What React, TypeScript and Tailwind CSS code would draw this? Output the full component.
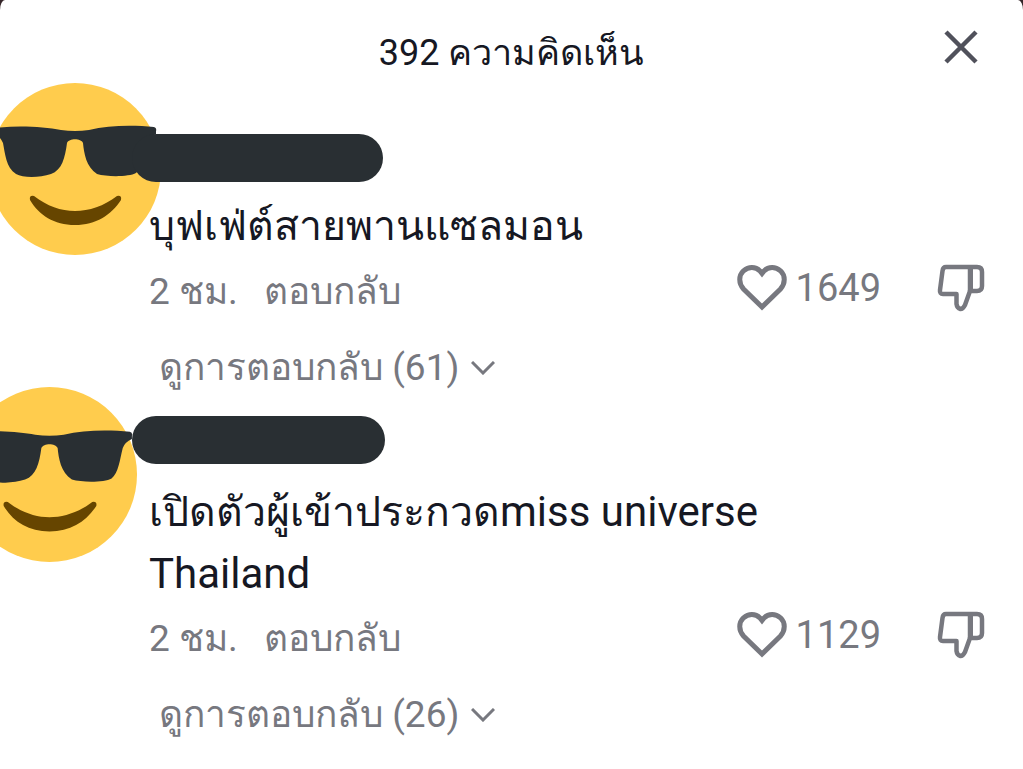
import React from 'react';

interface Comment {
  id: number;
  thai: string;
  latin?: string[];
  time: string;
  likes: number;
  replies: number;
  stickerClass: string;
  pillClass: string;
}

const comments: Comment[] = [
  {
    id: 1,
    thai: 'บุฟเฟ่ต์สายพานแซลมอน',
    time: '2 ชม.',
    likes: 1649,
    replies: 61,
    stickerClass: '-left-[11px] -top-[51px] w-[172px]',
    pillClass: 'left-[132px] top-0 w-[251px]',
  },
  {
    id: 2,
    thai: 'เปิดตัวผู้เข้าประกวด',
    latin: ['miss ', 'universe ', 'Thailand'],
    time: '2 ชม.',
    likes: 1129,
    replies: 26,
    stickerClass: '-left-[38px] -top-[33px] w-[175px]',
    pillClass: 'left-[132px] -top-[4px] w-[253px]',
  },
];

const CoolFace: React.FC<{ className?: string }> = ({ className = '' }) => (
  <svg viewBox="0 0 172 172" className={className} aria-hidden="true">
    <circle cx="86" cy="86" r="86" fill="#ffcc4d" />
    <path
      fill="#292f33"
      d="M5 47Q5 45 8 45C30 42 55 44 72 47Q86 49 100 47C120 42 145 42 165 44Q168 45 167 48V51Q160 54 158 60C155 72 154 84 147 90C140 94 118 94 108 91C97 84 95 70 94 60C92 55 80 55 78 60C76 75 73 87 62 91C50 95 34 95 27 91C17 85 16 70 14 60Q12 55 7 51Q5 50 5 47Z"
    />
    <path
      fill="#664500"
      d="M45 113Q40 112 41 117C50 132 65 142 86 142C107 142 122 132 132 117Q133 112 128 113C115 123 100 128 86 128C72 128 58 123 45 113Z"
    />
  </svg>
);

const HeartIcon: React.FC = () => (
  <svg viewBox="0 0 50 46" className="w-[50px]" fill="none" stroke="currentColor" strokeWidth="5" aria-hidden="true">
    <path d="M25 42L6.500 24C1.500 18.500 1.500 10.500 6.500 5.800C11.500 1.500 18.500 1.500 23 6L25 8.500L27 6C31.500 1.500 38.500 1.500 43.500 5.800C48.500 10.500 48.500 18.500 43.500 24Z" />
  </svg>
);

const DislikeIcon: React.FC = () => (
  <svg
    viewBox="0 0 48 48"
    className="w-[48px]"
    fill="none"
    stroke="currentColor"
    strokeWidth="4.500"
    strokeLinejoin="round"
    aria-hidden="true"
  >
    <path d="M9 3H40Q45 3 45 8V22Q45 27 40 27H33L28 41Q26 45 23.500 45Q20 44 19.500 40V30H6Q2.500 30 3 26L5.500 7Q6 3 9 3Z" />
    <path d="M33 3V27" />
    <path d="M34.500 3V27" strokeWidth="3" />
  </svg>
);

const CommentItem: React.FC<{ comment: Comment }> = ({ comment }) => (
  <article className="relative pt-[61px] pb-[11px] pl-[149px] pr-[38px]">
    <CoolFace className={`absolute ${comment.stickerClass}`} />
    <div className={`absolute h-[48px] rounded-full bg-[#292f33] ${comment.pillClass}`} />

    <p className="relative max-w-[640px] text-[42px] leading-[61px]">
      <span className="text-[41px]">{comment.thai}</span>
      {comment.latin?.map((word) => (
        <span key={word}>{word}</span>
      ))}
    </p>

    <div className="flex items-start justify-between text-[#77787f]">
      <div className="flex gap-[26px] text-[37px] leading-[70px]">
        <span>{comment.time}</span>
        <button type="button">ตอบกลับ</button>
      </div>
      <div className="flex gap-[56px] text-[38px] leading-[62px]">
        <button type="button" className="flex items-center gap-[9px]">
          <HeartIcon />
          {comment.likes}
        </button>
        <button type="button" aria-label="ไม่ชอบ">
          <DislikeIcon />
        </button>
      </div>
    </div>

    <button type="button" className="ml-[10px] flex items-center gap-[12px] text-[37px] leading-[82px] text-[#77787f]">
      ดูการตอบกลับ ({comment.replies})
      <svg viewBox="0 0 24 14" className="w-[24px]" fill="none" stroke="currentColor" strokeWidth="3" aria-hidden="true">
        <path d="M1 1L12 12L23 1" />
      </svg>
    </button>
  </article>
);

export default function App() {
  return (
    <div className="min-h-screen overflow-hidden bg-[#35262a] font-['Roboto',sans-serif] text-[#161823]">
      <main className="min-h-screen rounded-tl-[5px_10px] rounded-tr-[5px_10px] bg-white">
        <header className="relative mb-[28px] text-center">
          <h1 className="text-[36px] leading-[106px]">392 ความคิดเห็น</h1>
          <button type="button" aria-label="ปิด" className="absolute right-[45px] top-[30px] text-[#50515b]">
            <svg viewBox="0 0 34 34" className="w-[34px]" fill="none" stroke="currentColor" strokeWidth="4.5" aria-hidden="true">
              <path d="M2 2L32 32M32 2L2 32" />
            </svg>
          </button>
        </header>

        {comments.map((comment) => (
          <CommentItem key={comment.id} comment={comment} />
        ))}
      </main>
    </div>
  );
}
